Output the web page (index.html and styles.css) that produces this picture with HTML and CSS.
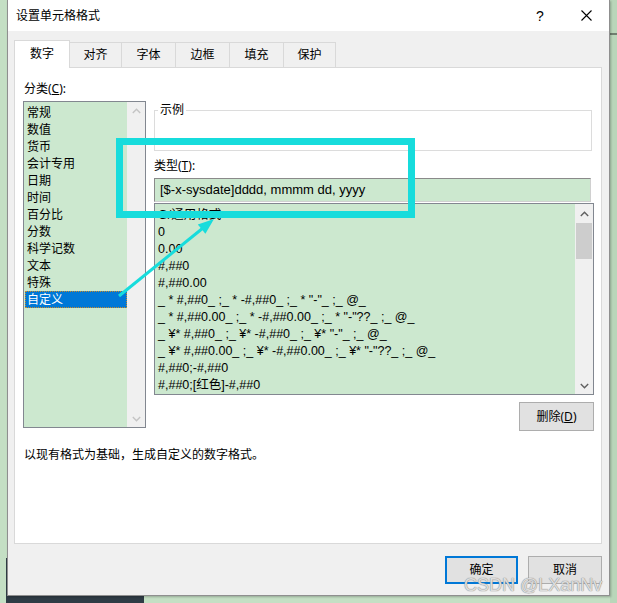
FILE: index.html
```html
<!DOCTYPE html>
<html lang="zh-CN">
<head>
<meta charset="utf-8">
<title>设置单元格格式</title>
<link rel="stylesheet" href="styles.css">
</head>
<body>
<div class="screen">
  <div class="dialog">
    <div class="titlebar">
      <span class="title">设置单元格格式</span>
      <span class="capbtn help">?</span>
      <span class="capbtn close">
        <svg width="11" height="11" viewBox="0 0 11 11"><path d="M0.5 0.5 L10.5 10.5 M10.5 0.5 L0.5 10.5" stroke="#000" stroke-width="1.1" fill="none"/></svg>
      </span>
    </div>
    <div class="dlgbody">
      <div class="tabs">
        <div class="tab active t1">数字</div>
        <div class="tab t2">对齐</div>
        <div class="tab t3">字体</div>
        <div class="tab t4">边框</div>
        <div class="tab t5">填充</div>
        <div class="tab t6">保护</div>
      </div>
      <div class="panel">
        <div class="cols">
          <div class="colleft">
            <div class="label">分类(<u>C</u>):</div>
            <div class="catlist">
              <div class="catitems">
                <div class="catitem">常规</div>
                <div class="catitem">数值</div>
                <div class="catitem">货币</div>
                <div class="catitem">会计专用</div>
                <div class="catitem">日期</div>
                <div class="catitem">时间</div>
                <div class="catitem">百分比</div>
                <div class="catitem">分数</div>
                <div class="catitem">科学记数</div>
                <div class="catitem">文本</div>
                <div class="catitem">特殊</div>
                <div class="catitem sel">自定义</div>
              </div>
              <div class="vscroll catscroll">
                <span class="arrow"><svg width="9" height="6" viewBox="0 0 9 6"><polyline points="0.8,5 4.5,1.3 8.2,5" fill="none" stroke="#c4c4c4" stroke-width="1.4"/></svg></span>
                <span class="arrow"><svg width="9" height="6" viewBox="0 0 9 6"><polyline points="0.8,1 4.5,4.7 8.2,1" fill="none" stroke="#c4c4c4" stroke-width="1.4"/></svg></span>
              </div>
            </div>
          </div>
          <div class="colright">
            <fieldset class="sample"><legend>示例</legend><div class="samplebody"></div></fieldset>
            <div class="label label2">类型(<u>T</u>):</div>
            <div class="input">[$-x-sysdate]dddd, mmmm dd, yyyy</div>
            <div class="fmtlist">
              <div class="fmtitems">
                <div class="fmtitem">G/通用格式</div>
                <div class="fmtitem">0</div>
                <div class="fmtitem">0.00</div>
                <div class="fmtitem">#,##0</div>
                <div class="fmtitem">#,##0.00</div>
                <div class="fmtitem">_ * #,##0_ ;_ * -#,##0_ ;_ * "-"_ ;_ @_</div>
                <div class="fmtitem">_ * #,##0.00_ ;_ * -#,##0.00_ ;_ * "-"??_ ;_ @_</div>
                <div class="fmtitem">_ ¥* #,##0_ ;_ ¥* -#,##0_ ;_ ¥* "-"_ ;_ @_</div>
                <div class="fmtitem">_ ¥* #,##0.00_ ;_ ¥* -#,##0.00_ ;_ ¥* "-"??_ ;_ @_</div>
                <div class="fmtitem">#,##0;-#,##0</div>
                <div class="fmtitem">#,##0;[红色]-#,##0</div>
              </div>
              <div class="vscroll fmtscroll">
                <span class="arrow up"><svg width="9" height="6" viewBox="0 0 9 6"><polyline points="0.8,5 4.5,1.3 8.2,5" fill="none" stroke="#606060" stroke-width="1.4"/></svg></span>
                <span class="thumb"></span>
                <span class="spacer"></span>
                <span class="arrow"><svg width="9" height="6" viewBox="0 0 9 6"><polyline points="0.8,1 4.5,4.7 8.2,1" fill="none" stroke="#606060" stroke-width="1.4"/></svg></span>
              </div>
            </div>
            <div class="btnrow"><button class="btn del">删除(<u>D</u>)</button></div>
          </div>
        </div>
        <p class="desc">以现有格式为基础，生成自定义的数字格式。</p>
      </div>
      <div class="footer">
        <button class="btn ok">确定</button>
        <button class="btn cancel">取消</button>
      </div>
    </div>
  </div>

  <svg class="annot" width="617" height="603" viewBox="0 0 617 603">
    <rect x="119.5" y="141.5" width="292" height="73" fill="none" stroke="#17dcdc" stroke-width="7"/>
    <line x1="119" y1="296" x2="203" y2="228" stroke="#17dcdc" stroke-width="3"/>
    <polygon points="214,219 205.4,233.8 197.8,224.4" fill="#17dcdc"/>
  </svg>
  <div class="watermark">CSDN @LXanNv</div>
</div>
</body>
</html>
```

FILE: styles.css
```css
* { box-sizing: border-box; }
html, body { margin: 0; padding: 0; }
body {
  width: 617px;
  height: 603px;
  overflow: hidden;
  background: #c4dfc4;
  font-family: "Noto Sans", "Noto Sans CJK SC", sans-serif;
  font-size: 12px;
  color: #000;
}
.screen {
  position: relative;
  width: 617px;
  height: 603px;
  padding-left: 7px;
  background:
    linear-gradient(#2f3b45, #2f3b45) 6px 558px / 138px 45px no-repeat,
    linear-gradient(#6f7f6f, #6f7f6f) 610px 33px / 7px 2px no-repeat,
    linear-gradient(#b9d6b9, #b9d6b9) 610px 0 / 7px 603px no-repeat,
    #c4dfc4;
}
.dialog {
  width: 603px;
  height: 596px;
  border: 1px solid #8f8f8f;
  border-top: 0;
  background: #f0f0f0;
  display: flex;
  flex-direction: column;
  box-shadow: 1px 1px 2px rgba(0, 0, 0, 0.25);
}
.titlebar {
  flex: none;
  height: 31px;
  background: #fff;
  display: flex;
  align-items: center;
  padding-left: 8px;
}
.title { flex: 1; line-height: 16px; }
.capbtn {
  width: 46px;
  height: 31px;
  display: flex;
  align-items: center;
  justify-content: center;
  font-family: "Liberation Sans", sans-serif;
  font-size: 14px;
}
.dlgbody {
  flex: 1;
  padding: 9px 7px 0 6px;
  display: flex;
  flex-direction: column;
}
.tabs {
  display: flex;
  align-items: flex-end;
  height: 28px;
}
.tab {
  height: 26px;
  border: 1px solid #d9d9d9;
  border-bottom: 0;
  margin-right: -1px;
  display: flex;
  align-items: center;
  justify-content: center;
  background: #f0f0f0;
  line-height: 16px;
  padding-bottom: 1px;
}
.tab.active {
  height: 28px;
  background: #fff;
  position: relative;
  z-index: 1;
  padding-bottom: 2px;
}
.t1 { width: 56px; }
.t2 { width: 53px; }
.t3 { width: 55px; }
.t4 { width: 55px; }
.t5 { width: 55px; }
.t6 { width: 53px; }
.panel {
  margin-top: -1px;
  height: 477px;
  border: 1px solid #d9d9d9;
  background: #fff;
  padding: 13px 0 0 8px;
}
.cols { display: flex; gap: 8px; align-items: flex-start; }
.colleft { width: 123px; display: flex; flex-direction: column; }
.label { line-height: 16px; padding-left: 1px; }
.catlist {
  margin-top: 4px;
  height: 327px;
  border: 1px solid #828790;
  background: #cce8cf;
  display: flex;
}
.catitems { width: 103px; padding: 2px 0 0 1px; }
.catitem { height: 17px; line-height: 17px; padding-left: 2px; white-space: nowrap; }
.catitem.sel {
  background: #0078d7;
  color: #fff;
  outline: 1px dotted #c98a2a;
  outline-offset: -1px;
}
.vscroll {
  background: #f0f0f0;
  display: flex;
  flex-direction: column;
  align-items: center;
}
.catscroll { width: 18px; justify-content: space-between; }
.arrow {
  height: 17px;
  width: 100%;
  display: flex;
  align-items: center;
  justify-content: center;
}
.colright { width: 440px; display: flex; flex-direction: column; }
.sample {
  margin: 21px 0 0;
  padding: 0 0 0 3px;
  border: 1px solid #dcdcdc;
  width: 438px;
  min-width: 0;
}
.sample legend { padding: 0 2px; line-height: 16px; }
.samplebody { height: 32px; }
.label2 { margin-top: 7px; padding-left: 0; }
.input {
  margin-top: 4px;
  width: 437px;
  height: 24px;
  border: 1px solid #8a8a8a;
  border-right-color: #d0d0d0;
  border-bottom-color: #d0d0d0;
  background: #cce8cf;
  padding-left: 5px;
  line-height: 22px;
  font-family: "Liberation Sans", "Noto Sans CJK SC", sans-serif;
  font-size: 13px;
  white-space: nowrap;
}
.fmtlist {
  margin-top: 1px;
  width: 440px;
  height: 192px;
  border: 1px solid #828790;
  background: #cce8cf;
  display: flex;
}
.fmtitems {
  flex: 1;
  padding: 3px 0 0 3px;
  overflow: hidden;
  white-space: nowrap;
  font-family: "Liberation Sans", "Noto Sans CJK SC", sans-serif;
  font-size: 12.5px;
}
.fmtitem { height: 17px; line-height: 17px; }
.fmtscroll { width: 18px; }
.fmtscroll .arrow.up { height: 18px; padding-top: 2px; }
.thumb {
  margin-top: 1px;
  width: 16px;
  height: 36px;
  background: #cdcdcd;
}
.spacer { flex: 1; }
.btnrow { display: flex; justify-content: flex-end; margin-top: 7px; }
.btn {
  margin: 0;
  padding: 0;
  height: 29px;
  background: #e1e1e1;
  border: 1px solid #adadad;
  font-family: "Noto Sans", "Noto Sans CJK SC", sans-serif;
  font-size: 12px;
  color: #000;
  line-height: 16px;
}
.del { width: 75px; }
.desc { margin: 16px 0 0 1px; line-height: 16px; }
.footer {
  margin-top: 12px;
  display: flex;
  justify-content: flex-end;
  gap: 10px;
}
.ok { width: 73px; height: 28px; border: 2px solid #0078d7; }
.cancel { width: 74px; height: 28px; }
.annot { position: absolute; left: 0; top: 0; pointer-events: none; }
.watermark {
  position: absolute;
  left: 464px;
  top: 577px;
  font-family: "Liberation Sans", sans-serif;
  font-size: 18px;
  line-height: 17px;
  color: rgba(236, 236, 236, 0.85);
  text-shadow: 0 0 1px #8a8a8a, 0 0 1px #8a8a8a;
  white-space: nowrap;
}
```
